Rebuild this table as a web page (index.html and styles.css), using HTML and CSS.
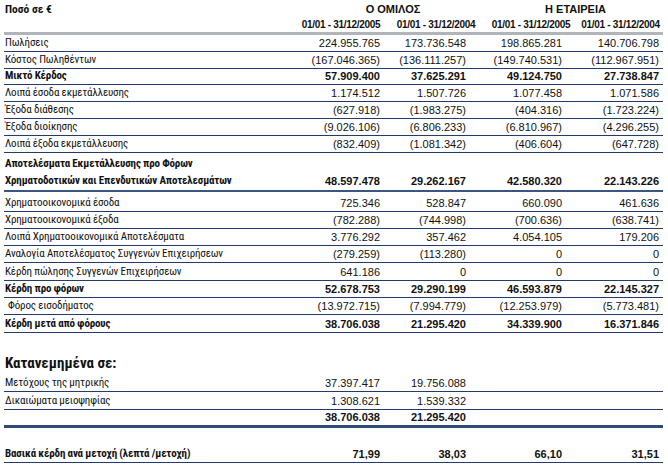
FILE: index.html
```html
<!DOCTYPE html>
<html lang="el">
<head>
<meta charset="utf-8">
<title>Αποτελέσματα</title>
<link rel="stylesheet" href="styles.css">
</head>
<body>
<table class="fin">
  <colgroup>
    <col class="w-lab"><col class="w-c1"><col class="w-c2"><col class="w-c3"><col class="w-c4">
  </colgroup>
  <thead>
    <tr class="h1">
      <th class="lab">Ποσό σε €</th>
      <th colspan="2" class="grp g1">Ο ΟΜΙΛΟΣ</th>
      <th colspan="2" class="grp g2">Η ΕΤΑΙΡΕΙΑ</th>
    </tr>
    <tr class="h2">
      <th></th>
      <th class="dt">01/01 - 31/12/2005</th>
      <th class="dt">01/01 - 31/12/2004</th>
      <th class="dt">01/01 - 31/12/2005</th>
      <th class="dt d4">01/01 - 31/12/2004</th>
    </tr>
  </thead>
  <tbody class="top">
    <tr><td class="lab">Πωλήσεις</td><td class="c1">224.955.765</td><td class="c2">173.736.548</td><td class="c3">198.865.281</td><td class="c4">140.706.798</td></tr>
    <tr><td class="lab">Κόστος Πωληθέντων</td><td class="c1">(167.046.365)</td><td class="c2">(136.111.257)</td><td class="c3">(149.740.531)</td><td class="c4">(112.967.951)</td></tr>
    <tr class="b"><td class="lab">Μικτό Κέρδος</td><td class="c1">57.909.400</td><td class="c2">37.625.291</td><td class="c3">49.124.750</td><td class="c4">27.738.847</td></tr>
    <tr><td class="lab">Λοιπά έσοδα εκμετάλλευσης</td><td class="c1">1.174.512</td><td class="c2">1.507.726</td><td class="c3">1.077.458</td><td class="c4">1.071.586</td></tr>
    <tr><td class="lab">Έξοδα διάθεσης</td><td class="c1">(627.918)</td><td class="c2">(1.983.275)</td><td class="c3">(404.316)</td><td class="c4">(1.723.224)</td></tr>
    <tr><td class="lab">Έξοδα διοίκησης</td><td class="c1">(9.026.106)</td><td class="c2">(6.806.233)</td><td class="c3">(6.810.967)</td><td class="c4">(4.296.255)</td></tr>
    <tr><td class="lab">Λοιπά έξοδα εκμετάλλευσης</td><td class="c1">(832.409)</td><td class="c2">(1.081.342)</td><td class="c3">(406.604)</td><td class="c4">(647.728)</td></tr>
    <tr class="b nob ra"><td class="lab">Αποτελέσματα Εκμετάλλευσης προ Φόρων</td><td></td><td></td><td></td><td></td></tr>
    <tr class="b rb"><td class="lab">Χρηματοδοτικών και Επενδυτικών Αποτελεσμάτων</td><td class="c1">48.597.478</td><td class="c2">29.262.167</td><td class="c3">42.580.320</td><td class="c4">22.143.226</td></tr>
  </tbody>
  <tbody class="low">
    <tr class="first"><td class="lab">Χρηματοοικονομικά έσοδα</td><td class="c1">725.346</td><td class="c2">528.847</td><td class="c3">660.090</td><td class="c4">461.636</td></tr>
    <tr><td class="lab">Χρηματοοικονομικά έξοδα</td><td class="c1">(782.288)</td><td class="c2">(744.998)</td><td class="c3">(700.636)</td><td class="c4">(638.741)</td></tr>
    <tr><td class="lab">Λοιπά Χρηματοοικονομικά Αποτελέσματα</td><td class="c1">3.776.292</td><td class="c2">357.462</td><td class="c3">4.054.105</td><td class="c4">179.206</td></tr>
    <tr><td class="lab">Αναλογία Αποτελέσματος Συγγενών Επιχειρήσεων</td><td class="c1">(279.259)</td><td class="c2">(113.280)</td><td class="c3">0</td><td class="c4">0</td></tr>
    <tr><td class="lab">Κέρδη πώλησης Συγγενών Επιχειρήσεων</td><td class="c1">641.186</td><td class="c2">0</td><td class="c3">0</td><td class="c4">0</td></tr>
    <tr class="b"><td class="lab">Κέρδη προ φόρων</td><td class="c1">52.678.753</td><td class="c2">29.290.199</td><td class="c3">46.593.879</td><td class="c4">22.145.327</td></tr>
    <tr><td class="lab ind">Φόρος εισοδήματος</td><td class="c1">(13.972.715)</td><td class="c2">(7.994.779)</td><td class="c3">(12.253.979)</td><td class="c4">(5.773.481)</td></tr>
    <tr class="b"><td class="lab">Κέρδη μετά από φόρους</td><td class="c1">38.706.038</td><td class="c2">21.295.420</td><td class="c3">34.339.900</td><td class="c4">16.371.846</td></tr>
  </tbody>
  <tbody class="alloc">
    <tr class="sect"><td class="lab" colspan="5">Κατανεμημένα σε:</td></tr>
    <tr><td class="lab">Μετόχους της μητρικής</td><td class="c1">37.397.417</td><td class="c2">19.756.088</td><td></td><td></td></tr>
    <tr><td class="lab">Δικαιώματα μειοψηφίας</td><td class="c1">1.308.621</td><td class="c2">1.539.332</td><td></td><td></td></tr>
    <tr class="b tot"><td class="lab"></td><td class="c1">38.706.038</td><td class="c2">21.295.420</td><td></td><td></td></tr>
    <tr class="b eps"><td class="lab">Βασικά κέρδη ανά μετοχή (λεπτά /μετοχή)</td><td class="c1">71,99</td><td class="c2">38,03</td><td class="c3">66,10</td><td class="c4">31,51</td></tr>
  </tbody>
</table>
</body>
</html>
```

FILE: styles.css
```css
html, body {
  margin: 0;
  padding: 0;
  background: #ffffff;
}

body {
  font-family: "Liberation Sans", Arial, sans-serif;
  font-size: 11px;
  color: #111111;
}

.fin {
  margin: 0 0 0 4px;
  width: 659px;
  border-collapse: collapse;
  table-layout: fixed;
}

.w-lab { width: 294px; }
.w-c1 { width: 86px; }
.w-c2 { width: 104px; }
.w-c3 { width: 86px; }
.w-c4 { width: 89px; }

.fin th,
.fin td {
  padding: 0;
  white-space: nowrap;
  line-height: 14px;
  vertical-align: bottom;
}

.fin .lab {
  font-family: "Roboto Condensed", "Liberation Sans", Arial, sans-serif;
  font-size: 11px;
  letter-spacing: -0.14px;
  text-align: left;
  padding-left: 1px;
}

.h1 th {
  height: 18px;
  font-weight: bold;
  font-size: 11px;
  vertical-align: middle;
}

.fin .h1 .lab {
  font-size: 11.5px;
  letter-spacing: 0;
}

.grp { text-align: center; }
.g1 { padding-left: 8px; }
.g2 { padding-right: 6px; }

.h2 th {
  height: 14px;
  border-bottom: 3px solid #b1b4b9;
  font-size: 10px;
  letter-spacing: -0.3px;
  font-weight: bold;
  text-align: center;
  vertical-align: middle;
}

.h2 .d4 { padding-left: 4px; }

.fin tbody td {
  border-bottom: 1px solid #223c69;
  padding-bottom: 1px;
}

.top td { height: 14.8px; }
.low td { height: 15.3px; }

.fin .ind { padding-left: 4px; }

.c1, .c2, .c3, .c4 { text-align: right; }
.fin .c1 { padding-right: 4px; }
.fin .c2 { padding-right: 22px; }
.fin .c3 { padding-right: 12px; }
.fin .c4 { padding-right: 4px; }

.b td { font-weight: bold; }

.fin tbody .nob td { border-bottom: none; }

.fin tbody .ra td { height: 18px; }
.fin tbody .rb td {
  height: 16px;
  padding-bottom: 2px;
  border-bottom: 2px solid #3b5682;
}

.fin tbody .first td { height: 18px; }

.alloc td { height: 16px; }

.fin tbody .sect td {
  height: 37px;
  border-bottom: none;
  font-size: 15px;
  letter-spacing: 0;
  font-weight: bold;
  padding-bottom: 4px;
}

.fin tbody .tot td {
  height: 14.6px;
  border-bottom: 3px solid #2f4a77;
}

.fin tbody .eps td {
  height: 33px;
}
```
